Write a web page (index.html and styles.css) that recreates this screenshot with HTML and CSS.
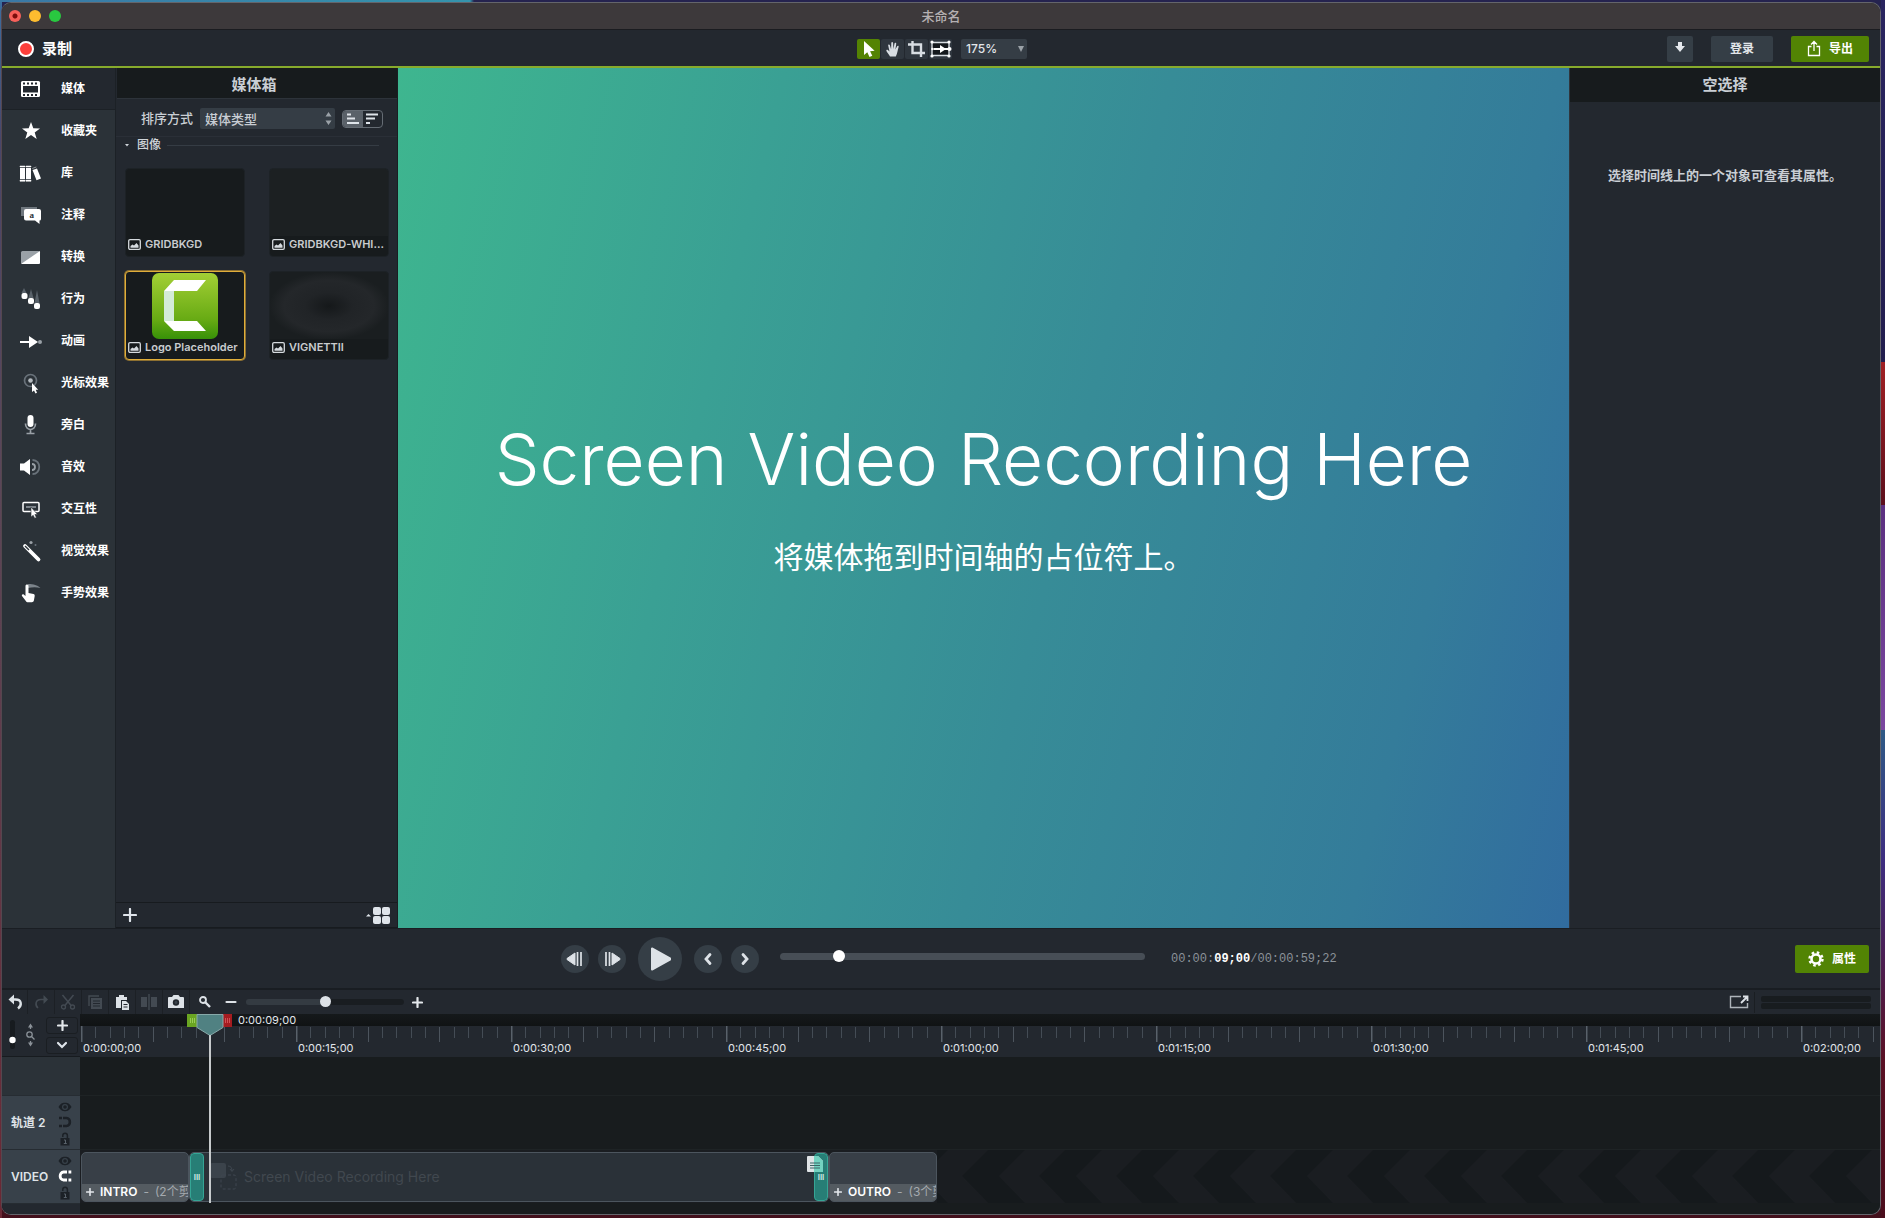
FILE: index.html
```html
<!DOCTYPE html>
<html lang="zh-CN">
<head>
<meta charset="utf-8">
<title>未命名</title>
<link rel="stylesheet" href="styles.css">
</head>
<body>
<svg class="defs" aria-hidden="true">
  <symbol id="i-image" viewBox="0 0 13 11"><rect x=".7" y=".7" width="11.600" height="9.600" rx="1.300" fill="none" stroke="#d5dade" stroke-width="1.300"/><path d="M2.500 8.700V7l2-1.500 1.500 1L8.500 4l2 2.500v2.200z" fill="#d5dade"/></symbol>
  <symbol id="i-plus" viewBox="0 0 14 14"><path d="M7 1v12M1 7h12" stroke="#dfe4ea" stroke-width="2.200" stroke-linecap="round"/></symbol>
  <symbol id="i-plus-bold" viewBox="0 0 11 11"><path d="M5.500 1v9M1 5.500h9" stroke="#e4e8ec" stroke-width="2.200" stroke-linecap="round"/></symbol>
  <symbol id="i-eye" viewBox="0 0 14 10"><path d="M0.500 5C3 1 5 .8 7 .8S11 1 13.500 5C11 9 9 9.200 7 9.200S3 9 .5 5z" fill="#1c2127"/><circle cx="7" cy="5" r="3" fill="#38414a"/><circle cx="7" cy="5" r="1.800" fill="#1c2127"/></symbol>
  <symbol id="i-lock" viewBox="0 0 12 14"><path d="M3.800 5V3.500a2.300 2.300 0 0 1 4.600 0V6.500" fill="none" stroke="#1c2127" stroke-width="1.500"/><rect x="1.500" y="6" width="9" height="7.500" fill="#1c2127"/><path d="M5 8h1.500v3.500M4.800 11.500h3" stroke="#59626b" fill="none"/></symbol>
  <symbol id="i-ticks" viewBox="0 0 215 16"><path d="M.5 0v16" stroke="#59616a" stroke-width="2"/><path d="M72.500 1v15M143.500 1v15" stroke="#4c545d"/><path d="M14.500 1v11M29.500 1v11M43.500 1v11M57.500 1v11M86.500 1v11M100.500 1v11M115.500 1v11M129.500 1v11M158.500 1v11M172.500 1v11M186.500 1v11M201.500 1v11" stroke="#444c55"/></symbol>
</svg>
<div class="window">
  <header class="titlebar">
    <div class="lights"><i class="light light-close"></i><i class="light light-min"></i><i class="light light-max"></i></div>
    <h1>未命名</h1>
  </header>

  <div class="toolbar">
    <button class="record"><i></i>录制</button>
    <div class="tools">
      <div class="toolset">
        <button class="tool active" aria-label="选择"><svg width="23" height="20" viewBox="0 0 23 20"><path d="M7 2v14l3.300-2.800L12.500 18l2.800-1.300-2.200-4.500 4.500-.4z" fill="#fff"/></svg></button>
        <button class="tool" aria-label="平移"><svg width="23" height="20" viewBox="0 0 23 20"><path d="M9 17.500c-.5-1.500-3-4-3.600-5.600-.3-1 .8-1.500 1.500-.8L8.500 12.500 7.200 6.500c-.2-1.200 1.300-1.500 1.700-.3l1.200 4L10.300 4c0-1.300 1.700-1.300 1.800 0l.3 6L13.500 4.600c.3-1.200 1.900-.9 1.700.3l-.8 5.700 1.700-3.400c.6-1 1.900-.5 1.500.7-1 3-1 6-2.800 9.600z" fill="#d8dde2"/></svg></button>
        <button class="tool" aria-label="裁剪"><svg width="23" height="20" viewBox="0 0 23 20"><path d="M7.500 2v12H20M3 5.500h13V18" fill="none" stroke="#d8dde2" stroke-width="2.400"/></svg></button>
        <button class="tool" aria-label="画布"><svg width="23" height="20" viewBox="0 0 23 20"><path d="M3 3.500h17v13H3zM3 3v14M20 3v14" fill="#14181c" stroke="#d8dde2" stroke-width="1.400"/><path d="M5 10h14" stroke="#fff" stroke-width="2"/><path d="M11 6l6 4-6 4z" fill="#fff"/><g fill="#fff"><circle cx="3" cy="3" r="1.600"/><circle cx="20" cy="3" r="1.600"/><circle cx="3" cy="17" r="1.600"/><circle cx="20" cy="17" r="1.600"/><circle cx="3.500" cy="10" r="1.300"/><circle cx="20.500" cy="10" r="2"/></g></svg></button>
      </div>
      <span class="zoom"><select aria-label="缩放"><option>175%</option></select></span>
    </div>
    <div class="account">
      <button class="btn btn-icon" aria-label="下载"><svg width="12" height="12" viewBox="0 0 12 12"><path d="M4 1h4v4h3L6 11 1 5h3z" fill="#e4e8ec"/></svg></button>
      <button class="btn">登录</button>
      <button class="btn btn-green btn-export"><svg width="14" height="17" viewBox="0 0 14 17"><path d="M4.500 6.500h-3v9h11v-9h-3M7 11V2M4 4.500l3-3 3 3" fill="none" stroke="#fff" stroke-width="1.300"/></svg>导出</button>
    </div>
  </div>

  <main class="workspace">
    <nav class="sidebar">
      <a href="#media" class="current"><svg viewBox="0 0 22 22"><rect x="1" y="3" width="19" height="16" rx="1.500" fill="#fff"/><path d="M3 8h15v6.500H3z" fill="#23282f"/><path d="M3 5.500h15M3 17h15" stroke="#23282f" stroke-width="1.800" stroke-dasharray="2 2"/></svg>媒体</a>
      <a href="#fav"><svg viewBox="0 0 22 22"><path d="M11 2l2.300 6.200 6.700.2-5.300 4 2 6.600L11 15l-5.700 4 2-6.600-5.300-4 6.700-.2z" fill="#fff"/></svg>收藏夹</a>
      <a href="#lib"><svg viewBox="0 0 22 22"><path d="M0 6h5v11H0zM6 6h5v11H6zM12.500 8l4.500-1.500 4 10-4.500 1.800z" fill="#fff"/><path d="M0 4h5v1H0zM6 4h5v1H6zM0 18h5v1.300H0zM6 18h5v1.300H6zM12.300 6.500l4-1.500" fill="#fff" stroke="#fff" stroke-width=".5"/></svg>库</a>
      <a href="#ann"><svg viewBox="0 0 22 22"><path d="M1 3h16v9H1z" fill="#6f777e"/><path d="M6 5h13a2 2 0 0 1 2 2v8a1.500 1.500 0 0 1-1.500 1.500V20L15 16.500H6a2 2 0 0 1-2-2V7a2 2 0 0 1 2-2z" fill="#fff"/><text x="9.500" y="14" class="glyph">a</text></svg>注释</a>
      <a href="#trans"><svg viewBox="0 0 22 22"><rect x="1" y="5" width="19" height="13" rx="1.500" fill="#9aa1a7"/><path d="M20 5v11.500a1.500 1.500 0 0 1-1.500 1.500H1z" fill="#fff"/></svg>转换</a>
      <a href="#beh"><svg viewBox="0 0 22 22"><path d="M4 0l2.500 5h-5zM11 1l2.500 9h-5zM17 2l2.500 13h-5z" fill="#59626a"/><g fill="#fff"><rect x="1.500" y="5" width="6" height="6" rx="2"/><rect x="8" y="10" width="6" height="6" rx="2"/><rect x="14" y="15" width="6" height="6" rx="2"/></g></svg>行为</a>
      <a href="#anim"><svg viewBox="0 0 22 22"><path d="M0 12h10" stroke="#fff" stroke-width="2"/><path d="M9 6l9 6-9 6z" fill="#fff"/><circle cx="20" cy="12" r="2" fill="#9aa1a7"/></svg>动画</a>
      <a href="#cursor"><svg viewBox="0 0 22 22"><circle cx="10.500" cy="8.500" r="6" fill="none" stroke="#69727a" stroke-width="1.700"/><circle cx="10.500" cy="8.500" r="2.300" fill="#b5bbc0"/><path d="M12 11v9l2-1.500 1.500 3 1.500-.7-1.300-3h2.500z" fill="#fff"/></svg>光标效果</a>
      <a href="#voice"><svg viewBox="0 0 22 22"><rect x="7.500" y="1" width="6" height="12" rx="3" fill="#fff"/><path d="M5.500 9.500c0 8 10 8 10 0M10.500 15.500v4M6.500 19.500h8" fill="none" stroke="#9aa1a7" stroke-width="1.700"/></svg>旁白</a>
      <a href="#audio"><svg viewBox="0 0 22 22"><path d="M0 7.500h4L10 3v16l-6-4.500H0z" fill="#fff"/><path d="M12 8c4 0 4 6 0 6" fill="none" stroke="#9aa1a7" stroke-width="1.800"/><path d="M12.500 4c9 0 9 14 0 14" fill="none" stroke="#69727a" stroke-width="1.800"/></svg>音效</a>
      <a href="#inter"><svg viewBox="0 0 22 22"><rect x="3" y="4.500" width="16" height="9" rx="1" fill="none" stroke="#fff" stroke-width="1.500"/><path d="M6 9h10" stroke="#9aa1a7" stroke-width="1.500"/><path d="M11 9v10l2.200-1.700 1.500 3 1.700-.8-1.500-3h2.600z" fill="#fff" stroke="#2b3238" stroke-width=".6"/></svg>交互性</a>
      <a href="#visual"><svg viewBox="0 0 22 22"><path d="M5 6l13.500 13.500" stroke="#fff" stroke-width="3.800" stroke-linecap="round"/><path d="M5 6l4 4" stroke="#2b3238" stroke-width="1.400"/><circle cx="11" cy="2.500" r="1.600" fill="#9aa1a7"/><circle cx="15.500" cy="5" r="1" fill="#69727a"/></svg>视觉效果</a>
      <a href="#gesture"><svg viewBox="0 0 22 22"><path d="M8 2c6 0 9 1 12.500 4-4-1-8-1-12.500 0z" fill="#7c848b"/><path d="M5.500 4c0-2 3-2 3 0v7l5 1c1 .3 1.300 1 1.200 2l-.8 4.500c-.3 1.200-1 1.700-2 1.700H8c-1 0-1.600-.3-2-1L2 14c-.7-1.500 1-2.300 2-1.300L5.500 14z" fill="#fff"/></svg>手势效果</a>
    </nav>

    <section class="bin">
      <h2>媒体箱</h2>
      <div class="sort">
        <label for="sort">排序方式</label>
        <span class="sort-select"><select id="sort"><option>媒体类型</option></select><svg width="7" height="13" viewBox="0 0 7 13"><path d="M3.500 0L6.500 4.500h-6zM3.500 13l3-4.500h-6z" fill="#9aa1a7"/></svg></span>
        <div class="segmented">
          <button class="on" aria-label="升序"><svg width="14" height="12" viewBox="0 0 14 12"><path d="M1 1.500h4M1 5.500h8M1 10h12" stroke="#dfe4ea" stroke-width="2"/></svg></button>
          <button aria-label="降序"><svg width="14" height="12" viewBox="0 0 14 12"><path d="M1 1.500h12M1 5.500h9M1 10h4" stroke="#dfe4ea" stroke-width="2"/></svg></button>
        </div>
      </div>
      <div class="group"><svg width="4" height="3" viewBox="0 0 4 3"><path d="M0 0h4L2 2.500z" fill="#cfd4d9"/></svg><span>图像</span><hr></div>
      <div class="tiles">
        <figure class="tile"><figcaption><svg width="13" height="11"><use href="#i-image"/></svg><span>GRIDBKGD</span></figcaption></figure>
        <figure class="tile tile-grid"><figcaption><svg width="13" height="11"><use href="#i-image"/></svg><span>GRIDBKGD-WHI...</span></figcaption></figure>
        <figure class="tile selected">
          <svg class="logo" width="66" height="66" viewBox="0 0 66 66"><defs><linearGradient id="lg" x1="0" y1="0" x2="0" y2="1"><stop offset="0" stop-color="#a3cf35"/><stop offset=".7" stop-color="#68ab14"/><stop offset="1" stop-color="#379108"/></linearGradient></defs><rect width="66" height="66" rx="7" fill="url(#lg)"/><path d="M12 18h10v30H12z" fill="#d4ebd8"/><path d="M22 7h32L45 18H12zM12 48h33l9 10H22z" fill="#fff"/></svg>
          <figcaption><svg width="13" height="11"><use href="#i-image"/></svg><span>Logo Placeholder</span></figcaption></figure>
        <figure class="tile tile-vignette"><figcaption><svg width="13" height="11"><use href="#i-image"/></svg><span>VIGNETTII</span></figcaption></figure>
      </div>
      <div class="bin-foot">
        <button aria-label="添加"><svg width="14" height="14"><use href="#i-plus"/></svg></button>
        <button aria-label="视图"><svg width="24" height="17" viewBox="0 0 24 17"><path d="M0 9.500h5L2.500 7z" fill="#dfe4ea"/><g fill="#dfe4ea"><rect x="7" width="8" height="8" rx="2"/><rect x="16" width="8" height="8" rx="2"/><rect x="7" y="9" width="8" height="8" rx="2"/><rect x="16" y="9" width="8" height="8" rx="2"/></g></svg></button>
      </div>
    </section>

    <section class="canvas">
      <p class="headline">Screen Video Recording Here</p>
      <p class="subline">将媒体拖到时间轴的占位符上。</p>
    </section>

    <aside class="props">
      <h2>空选择</h2>
      <p>选择时间线上的一个对象可查看其属性。</p>
    </aside>
  </main>

  <div class="playback">
    <div class="transport">
      <button class="round" aria-label="上一帧"><svg width="18" height="14" viewBox="0 0 18 14"><path d="M9 1v12L1 7.500v-1z" fill="#dde2e7" stroke="#dde2e7" stroke-linejoin="round"/><path d="M11.500 0v14M15 0v14" stroke="#dde2e7" stroke-width="1.700"/></svg></button>
      <button class="round" aria-label="下一帧"><svg width="18" height="14" viewBox="0 0 18 14"><path d="M9 1v12l8-5.500v-1z" fill="#dde2e7" stroke="#dde2e7" stroke-linejoin="round"/><path d="M3 0v14M6.500 0v14" stroke="#dde2e7" stroke-width="1.700"/></svg></button>
      <button class="round big" aria-label="播放"><svg width="24" height="26" viewBox="0 0 24 26"><path d="M4 2.500v21L22 13.700v-1.400z" fill="#dde2e7" stroke="#dde2e7" stroke-width="2" stroke-linejoin="round"/></svg></button>
      <button class="round" aria-label="上一个"><svg width="10" height="14" viewBox="0 0 10 14"><path d="M7 2.500L3 7l4 4.500" fill="none" stroke="#dde2e7" stroke-width="2.800" stroke-linecap="round"/></svg></button>
      <button class="round" aria-label="下一个"><svg width="10" height="14" viewBox="0 0 10 14"><path d="M3 2.500L7 7l-4 4.500" fill="none" stroke="#dde2e7" stroke-width="2.800" stroke-linecap="round"/></svg></button>
    </div>
    <input class="scrub" type="range" aria-label="播放位置" min="0" max="100" value="15">
    <output class="timecode">00:00:<b>09;00</b>/00:00:59;22</output>
    <button class="btn btn-green btn-props"><svg width="16" height="16" viewBox="0 0 16 16"><circle cx="8" cy="8" r="4.500" fill="none" stroke="#fff" stroke-width="2.600"/><circle cx="8" cy="8" r="6.500" fill="none" stroke="#fff" stroke-width="2.400" stroke-dasharray="2.550 2.550"/></svg>属性</button>
  </div>

  <div class="edit-bar">
    <button aria-label="撤消"><svg viewBox="0 0 16 16"><path d="M4 5.500h4.500c6.500 0 6.500 6 2.500 9" fill="none" stroke="#dde2e7" stroke-width="2.400"/><path d="M7 .5v10L1.500 5.500z" fill="#dde2e7"/></svg></button>
    <button aria-label="重做" disabled><svg viewBox="0 0 16 16"><path d="M13 5.500H8c-6 0-6 6-3 8.500" fill="none" stroke="#434a52" stroke-width="1.600"/><path d="M10.500 1v9l4.500-4.500z" fill="#434a52"/></svg></button>
    <button aria-label="剪切" disabled><svg viewBox="0 0 16 16"><path d="M2.500 1l9 11M13.500 1l-9 11" stroke="#434a52" stroke-width="1.500"/><circle cx="3.500" cy="13" r="2" fill="none" stroke="#434a52" stroke-width="1.300"/><circle cx="12.500" cy="13" r="2" fill="none" stroke="#434a52" stroke-width="1.300"/></svg></button>
    <button aria-label="复制" disabled><svg viewBox="0 0 16 16"><path d="M2 12V2h10" fill="none" stroke="#434a52" stroke-width="1.400"/><path d="M4 4h11v11H4z" fill="#434a52"/><path d="M6 7h7M6 9.500h7M6 12h7" stroke="#23282f"/></svg></button>
    <button aria-label="粘贴"><svg viewBox="0 0 16 16"><path d="M2 3h3V1h5v2h3v3H7v8H2z" fill="#dde2e7"/><path d="M8 7h4l3 3v6H8z" fill="#dde2e7"/><path d="M9.500 10.500h4M9.500 13h4" stroke="#23282f"/></svg></button>
    <button aria-label="分割" disabled><svg viewBox="0 0 16 16"><path d="M0 3h6v10H0zM10 3h6v10h-6z" fill="#434a52"/><path d="M8 0v16" stroke="#434a52" stroke-width="1.400"/></svg></button>
    <button aria-label="快照"><svg viewBox="0 0 16 16"><path d="M0 4a1 1 0 0 1 1-1h3l1.500-2h5L12 3h3a1 1 0 0 1 1 1v10H0z" fill="#dde2e7"/><circle cx="8" cy="8.500" r="3.200" fill="#23282f"/><circle cx="8" cy="8.500" r="1.400" fill="#3c444c"/></svg></button>
    <span class="magnify"><svg width="12" height="12" viewBox="0 0 12 12"><circle cx="4" cy="4" r="3" fill="none" stroke="#dde2e7" stroke-width="1.800"/><path d="M6.500 6.500l4.500 4.500" stroke="#dde2e7" stroke-width="2.400"/></svg></span>
    <button class="plain" aria-label="缩小"><svg viewBox="0 0 16 16"><path d="M3.500 8h9" stroke="#dde2e7" stroke-width="2.200" stroke-linecap="round"/></svg></button>
    <input class="zoom-range" type="range" aria-label="时间轴缩放" min="0" max="100" value="50">
    <button class="plain" aria-label="放大"><svg width="11" height="11" class="small"><use href="#i-plus-bold"/></svg></button>
    <button class="detach plain" aria-label="分离时间轴"><svg class="wide" viewBox="0 0 20 14"><path d="M12 1.500H1.500v11h17V8" fill="none" stroke="#aeb4ba" stroke-width="1.400"/><path d="M12 8l5.500-5.500M14 1.500h4.500V6" fill="none" stroke="#dde2e7" stroke-width="1.800"/></svg></button>
    <div class="meters"><i></i><i></i></div>
  </div>

  <section class="timeline">
    <div class="heads">
      <div class="head-tools">
        <svg width="34" height="32" viewBox="0 0 34 32"><rect x="3" y="1" width="5" height="29" rx="2.500" fill="#171b1f"/><circle cx="5.500" cy="21" r="3.200" fill="#fff"/><g fill="none" stroke="#8b9299" stroke-width="1.300"><circle cx="22.500" cy="15.500" r="2.700"/><path d="M24.500 17.500l3 3M23.500 6v4M23.500 22v4"/></g><path d="M21 8.500l2.500-4 2.500 4zM21 23.500l2.500 4 2.500-4z" fill="#8b9299"/></svg>
        <div class="head-buttons">
          <button aria-label="添加轨道"><svg width="11" height="11"><use href="#i-plus-bold"/></svg></button>
          <button aria-label="折叠轨道"><svg width="12" height="8" viewBox="0 0 12 8"><path d="M2 2l4 4 4-4" fill="none" stroke="#dfe4ea" stroke-width="2.200" stroke-linecap="round"/></svg></button>
        </div>
      </div>
      <div class="head head-empty"></div>
      <div class="head"><span>轨道 2</span><div class="head-icons"><svg width="14" height="10"><use href="#i-eye"/></svg><svg width="14" height="12" viewBox="0 0 14 12"><path d="M5 2h3.500c4.500 0 4.500 8 0 8H5" fill="none" stroke="#1c2127" stroke-width="2.600"/><path d="M1 .7h3v2.600H1zM1 8.700h3v2.600H1z" fill="#1c2127"/></svg><svg width="12" height="14"><use href="#i-lock"/></svg></div></div>
      <div class="head"><span>VIDEO</span><div class="head-icons"><svg width="14" height="10"><use href="#i-eye"/></svg><svg width="14" height="12" viewBox="0 0 14 12"><path d="M9 2H5.500C1 2 1 10 5.500 10H9" fill="none" stroke="#fff" stroke-width="2.800"/><path d="M10.500.6h2.800v2.800h-2.800zM10.500 8.600h2.800v2.800h-2.800z" fill="#fff"/></svg><svg width="12" height="14"><use href="#i-lock"/></svg></div></div>
    </div>
    <div class="tracks">
      <div class="range"></div>
      <ol class="ruler">
        <li><svg><use href="#i-ticks"/></svg>0:00:00;00</li>
        <li><svg><use href="#i-ticks"/></svg>0:00:15;00</li>
        <li><svg><use href="#i-ticks"/></svg>0:00:30;00</li>
        <li><svg><use href="#i-ticks"/></svg>0:00:45;00</li>
        <li><svg><use href="#i-ticks"/></svg>0:01:00;00</li>
        <li><svg><use href="#i-ticks"/></svg>0:01:15;00</li>
        <li><svg><use href="#i-ticks"/></svg>0:01:30;00</li>
        <li><svg><use href="#i-ticks"/></svg>0:01:45;00</li>
        <li><svg><use href="#i-ticks"/></svg>0:02:00;00</li>
      </ol>
      <div class="track track-empty"></div>
      <div class="track"></div>
      <div class="track track-video">
        <div class="clip clip-group"><div class="clip-name"><svg width="8" height="8"><use href="#i-plus-bold"/></svg><b>INTRO</b><span>-</span><span>(2个剪辑)</span></div></div>
        <div class="clip clip-main">
          <i class="handle">III</i>
          <svg width="28" height="28" viewBox="0 0 28 28"><rect width="16" height="15" rx="2" fill="#3b434b"/><path d="M18 3c3 0 4 2 4 5M20 6l2 2.500L24 6" fill="none" stroke="#3f4750"/><rect x="11" y="12" width="15" height="14" rx="2" fill="none" stroke="#3f4750" stroke-dasharray="3 2"/></svg>
          <span>Screen Video Recording Here</span>
          <svg class="note" width="16" height="16" viewBox="0 0 16 16"><path d="M1 0h10l5 5v10a1 1 0 0 1-1 1H1a1 1 0 0 1-1-1V1a1 1 0 0 1 1-1z" fill="#dfe3e6"/><path d="M7 0h4l5 5v11H7z" fill="#73d3c1"/><path d="M3 7h10M3 9.500h10M3 12h10" stroke="#3d6466"/></svg>
          <i class="handle">III</i>
        </div>
        <div class="clip clip-group"><div class="clip-name"><svg width="8" height="8"><use href="#i-plus-bold"/></svg><b>OUTRO</b><span>-</span><span>(3个剪辑)</span></div></div>
        <svg class="chevrons" aria-hidden="true"><defs><pattern id="chev" width="77" height="53" patternUnits="userSpaceOnUse"><path d="M25 26L51 0h37L62 26l26 27H51z" fill="#15191c"/><path d="M-52 26L-26 0h37L-15 26l26 27h-37z" fill="#15191c"/></pattern></defs><rect width="100%" height="53" fill="url(#chev)"/></svg>
      </div>
      <div class="playhead">
        <svg width="46" height="22" viewBox="0 0 46 22"><rect x="0" y="0" width="10" height="13" fill="#6aa522"/><path d="M3.500 4v5M5.500 4v5M7.500 4v5" stroke="#99cd55"/><rect x="36" y="0" width="9" height="13" fill="#a51c20"/><path d="M38.500 4v5M40.500 4v5M42.500 4v5" stroke="#d05055"/><path d="M10 .5h26v13L23 21.500 10 13.500z" fill="#508182" stroke="#87a9a9"/></svg>
        <span>0:00:09;00</span>
        <i></i>
      </div>
    </div>
  </section>
</div>
</body>
</html>
```

FILE: styles.css
```css
* { box-sizing: border-box; }

html, body { height: 100%; }

body {
  margin: 0;
  padding: 2px 4px 3px 1px;
  display: flex;
  background:
    linear-gradient(90deg, #3a78a6 0, #3494ad 470px, transparent 474px) 0 0 / 100% 2px no-repeat,
    linear-gradient(180deg, #2a2560 0, #221d4e 362px, #a02024 362px, #5c0f1c 505px, #5b3080 505px, #7a479f 730px, #2f5a86 730px, #3d2d80 860px, #5a1024 1060px, #4b0d1c 100%) 100% 0 / 4px 100% no-repeat,
    linear-gradient(180deg, #3c6ea0 0, #49466a 140px, #5b4658 500px, #6b2733 100%) 0 0 / 2px 100% no-repeat,
    linear-gradient(180deg, #25234f 0, #25234f 50%, #43101c 50%);
  color: #e2e6ea;
  font-family: Inter, "Noto Sans CJK SC", sans-serif;
  font-size: 12px;
  line-height: 16px;
}

h1, h2, p, figure, ol { margin: 0; padding: 0; }
svg { display: block; flex: none; overflow: visible; }
.defs { position: absolute; width: 0; height: 0; }

button {
  display: flex;
  align-items: center;
  justify-content: center;
  margin: 0;
  padding: 0;
  border: 0;
  background: none;
  color: inherit;
  font: inherit;
}

select {
  appearance: none;
  width: 100%;
  height: 100%;
  border: 0;
  border-radius: 2px;
  background: #353d45;
  color: inherit;
  font: inherit;
}

.window {
  flex: 1;
  min-width: 0;
  display: flex;
  flex-direction: column;
  overflow: hidden;
  border: 1px solid #64656b;
  border-left-color: #55474f;
  border-radius: 10px;
  background: #23282f;
}

/* Title bar */
.titlebar {
  display: grid;
  grid-template-columns: 1fr auto 1fr;
  align-items: center;
  height: 27px;
  padding: 0 7px 1px;
  border-bottom: 1px solid #1b1c20;
  background: #3d393b;
}
.titlebar h1 { color: #b5b0b2; font-size: 13px; font-weight: 500; }
.lights { display: flex; gap: 8px; }
.light { width: 12px; height: 12px; border-radius: 50%; }
.light-close { background: radial-gradient(circle, #7c0d0b 2px, #f7605a 3px); }
.light-min { background: #fdbc2f; }
.light-max { background: #29c840; }

/* Toolbar */
.toolbar {
  display: grid;
  grid-template-columns: 1fr auto 1fr;
  align-items: center;
  height: 38px;
  padding: 1px 11px 0 16px;
  border-bottom: 2px solid #87ab2c;
}
.record { justify-self: start; gap: 8px; font-size: 15px; font-weight: 700; color: #fff; }
.record i { width: 16px; height: 16px; border: 2px solid #fff; border-radius: 50%; background: #fc3f3b; }
.tools { display: flex; gap: 9px; margin-right: 3px; }
.toolset { display: flex; gap: 1px; }
.tool { width: 23px; height: 20px; border-radius: 2px; background: #2f363e; }
.tool.active { background: #548303; }
.zoom { position: relative; width: 66px; height: 20px; font-weight: 500; }
.zoom select { padding: 0 5px; }
.zoom::after {
  content: "";
  position: absolute;
  top: 7px;
  right: 3px;
  border: 3px solid transparent;
  border-top: 6px solid #9aa1a7;
  border-bottom: 0;
}
.account { display: flex; justify-self: end; gap: 18px; }
.btn {
  width: 62px;
  height: 26px;
  border-radius: 2px;
  background: #353e46;
  font-weight: 700;
}
.btn-icon { width: 26px; padding-bottom: 4px; }
.btn-green { gap: 8px; background: #528404; color: #fff; }
.btn-export { width: 78px; }
.btn-props { width: 74px; height: 28px; margin-left: auto; }

/* Workspace */
.workspace { flex: 1; min-height: 0; display: flex; }
.sidebar { width: 114px; background: #2b3238; border-right: 1px solid #1c2126; }
.sidebar a {
  display: flex;
  align-items: center;
  gap: 19px;
  height: 42px;
  padding-left: 18px;
  color: #fff;
  font-weight: 700;
  text-decoration: none;
  white-space: nowrap;
}
.sidebar svg { width: 22px; height: 22px; }
.sidebar .current { background: #23282f; border-bottom: 1px solid #1c2126; }
.glyph { font: 700 9px "Liberation Serif", serif; fill: #2b3238; }

.bin { width: 282px; display: flex; flex-direction: column; border-right: 1px solid #1a1e22; }
.bin h2, .props h2 {
  height: 31px;
  background: #171b1d;
  color: #c9ced4;
  font-size: 15px;
  font-weight: 700;
  line-height: 34px;
  text-align: center;
}
.bin h2 { margin-left: 1px; padding-right: 6px; border-bottom: 1px solid #2d333a; }
.sort {
  display: flex;
  align-items: center;
  height: 38px;
  padding-left: 25px;
  border-bottom: 1px solid #2a2f37;
  color: #c9ced4;
  font-size: 13px;
  font-weight: 500;
}
.sort-select { position: relative; width: 135px; height: 21px; margin: 2px 7px 0; }
.sort-select select { padding: 0 5px; }
.sort-select svg { position: absolute; top: 4px; right: 3px; }
.segmented {
  display: flex;
  width: 41px;
  height: 18px;
  margin-top: 2px;
  overflow: hidden;
  border: 1px solid #656c74;
  border-radius: 4px;
}
.segmented button { flex: 1; }
.segmented .on { background: #5a6169; }
.group { display: flex; align-items: center; height: 16px; padding: 0 18px 0 9px; font-weight: 500; color: #cfd4d9; }
.group span { margin: 0 6px 0 8px; }
.group hr { flex: 1; margin: 0; border: 0; border-top: 1px solid #353c44; }
.tiles {
  display: grid;
  grid-template-columns: 120px 120px;
  grid-auto-rows: 89px;
  gap: 14px 24px;
  padding: 15px 9px;
}
.tile {
  display: flex;
  flex-direction: column;
  align-items: center;
  justify-content: flex-end;
  border: 1px solid #1d2226;
  border-radius: 4px;
  background: #171b1d;
}
.tile-grid { background: linear-gradient(#1c2022 67px, #171b1d 67px); }
.tile-vignette { background: radial-gradient(ellipse 60px 34px at 50% 34px, #15181a 0, #212427 40%, #24272a 75%, #1a1e20 100%) 0 0 / 100% 67px no-repeat, #171b1d; }
.tile.selected { border-color: #e0ae3a; box-shadow: 0 0 0 1px #8d7031; }
.tile figcaption {
  display: flex;
  align-items: center;
  gap: 4px;
  align-self: stretch;
  height: 20px;
  padding: 0 0 4px 2px;
  color: #c9cccf;
  font-size: 11px;
  font-weight: 600;
  white-space: nowrap;
}
.bin-foot {
  display: flex;
  align-items: center;
  justify-content: space-between;
  height: 26px;
  margin-top: auto;
  padding: 0 7px 0 7px;
  border-top: 1px solid #171b1f;
  border-bottom: 1px solid #171b1f;
}

.canvas {
  flex: 1;
  min-width: 0;
  display: flex;
  flex-direction: column;
  align-items: center;
  justify-content: center;
  gap: 38px;
  overflow: hidden;
  background: linear-gradient(104deg, #3eb68f 0%, #3aa094 28%, #378c97 56%, #347c9a 84%, #316c9f 100%);
  color: #fff;
  text-align: center;
  white-space: nowrap;
}
.headline { font-size: 71px; font-weight: 300; line-height: 80px; }
.subline { font-size: 30px; line-height: 40px; }

.props { width: 311px; border-left: 1px solid #30363d; }
.props h2 { height: 34px; }
.props p { padding-top: 64px; color: #c9ced4; font-size: 13px; font-weight: 700; line-height: 18px; text-align: center; }

/* Playback */
.playback {
  display: flex;
  align-items: center;
  height: 60px;
  padding: 0 11px 0 559px;
  border-top: 1px solid #1a1e23;
}
.transport { display: flex; align-items: center; gap: 9px; }
.round { width: 28px; height: 28px; border-radius: 50%; background: #353e46; }
.round.big { width: 44px; height: 44px; margin: 0 3px; }

input { appearance: none; margin: 0; background: none; }
.scrub { width: 365px; height: 14px; margin: 0 26px 5px 21px; }
.scrub::-webkit-slider-runnable-track { height: 7px; border-radius: 4px; background: #474e56; }
.scrub::-webkit-slider-thumb {
  appearance: none;
  width: 12px;
  height: 12px;
  margin-top: -3px;
  border-radius: 50%;
  background: #fff;
}
.timecode { color: #8b9299; font-family: "Liberation Mono", monospace; font-size: 12px; }
.timecode b { color: #fff; }

/* Edit bar */
.edit-bar {
  display: flex;
  align-items: center;
  height: 26px;
  border-top: 2px solid #191d22;
}
.edit-bar button { width: 27px; height: 24px; border-right: 1px solid #1c2025; }
.edit-bar button:first-child { width: 26px; }
.edit-bar button.plain { border: 0; }
.edit-bar button svg { width: 16px; height: 16px; }
.edit-bar button svg.small { width: 11px; height: 11px; }
.edit-bar button svg.wide { width: 20px; height: 14px; }
.magnify { width: 27px; display: flex; justify-content: center; padding-left: 3px; }
.zoom-range { width: 158px; height: 12px; margin: 0 0 0 2px; }
.zoom-range::-webkit-slider-runnable-track { height: 6px; border-radius: 3px; background: linear-gradient(90deg, #343b42 50%, #191d21 50%); }
.zoom-range::-webkit-slider-thumb {
  appearance: none;
  width: 11px;
  height: 11px;
  margin-top: -3px;
  border-radius: 50%;
  background: #dde2e7;
}
.edit-bar .detach { margin-left: auto; }
.meters {
  display: flex;
  flex-direction: column;
  gap: 1px;
  width: 126px;
  margin-left: 2px;
  padding: 4px 9px 4px 6px;
  border-left: 1px solid #1a1e22;
}
.meters i { height: 6px; border-radius: 2px; background: #181c1f; }

/* Timeline */
.timeline { display: flex; height: 200px; background: #181c1e; }
.heads { width: 78px; background: #23282f; }
.head-tools { display: flex; align-items: center; justify-content: space-between; height: 43px; padding: 0 2px 0 5px; border-bottom: 1px solid #171b1f; }
.head-buttons { display: flex; flex-direction: column; gap: 3px; }
.head-buttons button { width: 32px; height: 17px; border: 1px solid #1a1e22; border-radius: 3px; }
.head {
  display: flex;
  align-items: center;
  justify-content: space-between;
  height: 54px;
  padding: 0 6px 0 9px;
  border-bottom: 1px solid #262c32;
  background: #38414a;
  color: #dfe3e7;
  font-weight: 600;
}
.head-empty { height: 39px; background: #2b3238; }
.head-icons { display: flex; flex-direction: column; align-items: center; gap: 4px; width: 18px; padding-top: 2px; }

.tracks { position: relative; flex: 1; min-width: 0; overflow: hidden; }
.range { height: 12px; background: linear-gradient(#15191b, #101314); }
.ruler { display: flex; height: 31px; padding-left: 1px; background: #23282f; list-style: none; }
.ruler li { flex: none; width: 215px; padding-left: 2px; font-size: 11px; line-height: 13px; }
.ruler svg { width: 215px; height: 16px; margin-left: -2px; }
.track { height: 54px; border-bottom: 1px solid #1e2325; }
.track-empty { height: 39px; }
.track-video { display: flex; align-items: center; height: 53px; padding-left: 1px; border-bottom: 0; background: #1a1d21; }

.clip {
  display: flex;
  height: 50px;
  overflow: hidden;
  border: 1px solid #4c555e;
  border-radius: 5px;
  background: #383f47;
}
.clip-group { width: 108px; align-items: flex-end; }
.clip-name {
  display: flex;
  align-items: center;
  gap: 6px;
  width: 100%;
  height: 17px;
  padding: 0 4px;
  overflow: hidden;
  background: #545b61;
  color: #fff;
  white-space: nowrap;
}
.clip-name b { font-weight: 600; }
.clip-name span { flex: none; color: #a4aaaf; }
.clip-main { align-items: center; width: 640px; background: #2a3138; color: #41484f; font-size: 14px; }
.clip-main span { margin: 0 auto 0 6px; }
.clip-main > svg { margin-left: 6px; }
.clip-main .note { margin: 0 -9px 26px 0; z-index: 1; }
.handle {
  display: flex;
  align-items: center;
  justify-content: center;
  width: 14px;
  height: 48px;
  border: 1px solid #35a595;
  border-radius: 4px;
  background: #277e76;
  color: #d6ebe8;
  font-size: 8px;
  font-style: normal;
  font-weight: 600;
}
.chevrons { flex: 1; min-width: 0; height: 53px; overflow: hidden; }

/* Playhead lies over the ruler and the tracks */
.playhead { position: absolute; top: 0; left: 107px; display: flex; gap: 5px; font-size: 11px; line-height: 13px; }
.playhead i { position: absolute; top: 21px; left: 22px; width: 2px; height: 168px; background: #c6cacc; }
```
